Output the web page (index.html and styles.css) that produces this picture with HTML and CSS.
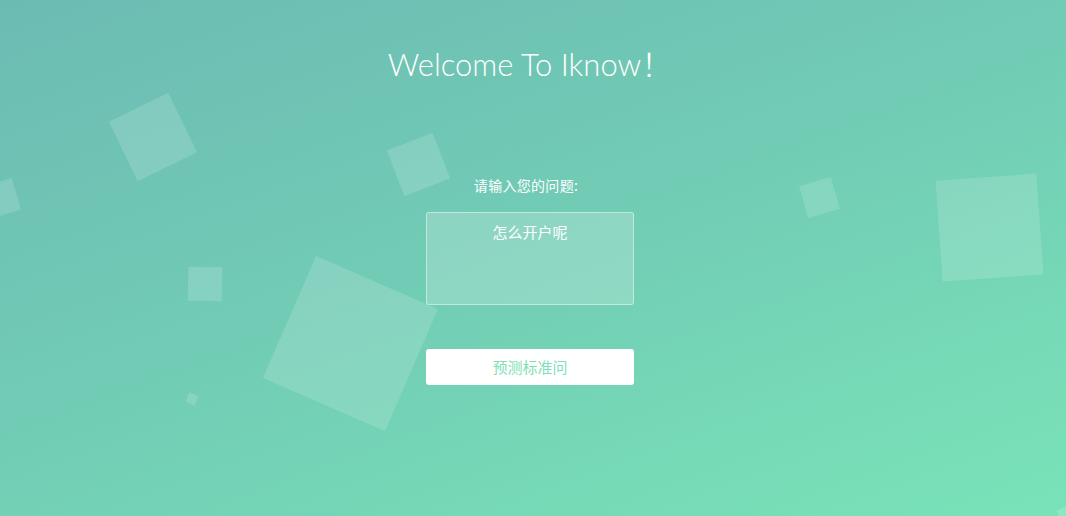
FILE: index.html
```html
<!DOCTYPE html>
<html lang="zh-CN">
<head>
<meta charset="utf-8">
<title>Iknow</title>
<link rel="stylesheet" href="styles.css">
</head>
<body>
<div class="page">
  <div class="bubbles">
    <span class="sq" style="left:120px;top:104px;width:66px;height:66px;transform:rotate(-26deg)"></span>
    <span class="sq" style="left:-16px;top:182px;width:33px;height:33px;transform:rotate(-16deg)"></span>
    <span class="sq" style="left:188px;top:267px;width:34px;height:34px;transform:rotate(1deg)"></span>
    <span class="sq" style="left:187px;top:394px;width:10px;height:10px;transform:rotate(25deg)"></span>
    <span class="sq" style="left:284px;top:277px;width:133px;height:133px;transform:rotate(23.5deg)"></span>
    <span class="sq" style="left:394px;top:140px;width:49px;height:49px;transform:rotate(-21deg)"></span>
    <span class="sq" style="left:803px;top:181px;width:33px;height:33px;transform:rotate(-16deg)"></span>
    <span class="sq" style="left:939px;top:177px;width:101px;height:101px;transform:rotate(-4deg)"></span>
    <span class="sq" style="left:1066px;top:496px;width:60px;height:60px;transform:rotate(-24deg)"></span>
  </div>
  <main class="content">
    <h1 class="title">Welcome To Iknow<span class="bang">！</span></h1>
    <form class="form">
      <label class="label" for="q">请输入您的问题:</label>
      <textarea id="q" class="question">怎么开户呢</textarea>
      <button type="button" class="submit">预测标准问</button>
    </form>
  </main>
</div>
</body>
</html>
```

FILE: styles.css
```css
html, body {
  margin: 0;
  padding: 0;
  height: 100%;
}

body {
  font-family: "Lato", "Noto Sans CJK SC", sans-serif;
  color: #fff;
  overflow: hidden;
}

.page {
  position: relative;
  width: 100%;
  height: 516px;
  overflow: hidden;
  background: linear-gradient(160deg, #6cbbb3 0%, #72cdb5 50%, #79e3b8 100%);
}

.bubbles {
  position: absolute;
  inset: 0;
  pointer-events: none;
}

.sq {
  position: absolute;
  display: block;
  background: rgba(255, 255, 255, 0.15);
}

.content {
  position: relative;
  display: flex;
  flex-direction: column;
  align-items: center;
  padding-top: 41px;
  padding-right: 26px;
}

.title {
  margin: 0 0 0 20px;
  font-family: "Lato", "Noto Sans CJK SC", sans-serif;
  font-weight: 300;
  font-size: 31px;
  line-height: 43px;
  color: #fff;
}

.bang {
  font-family: "Noto Sans CJK SC", sans-serif;
  font-weight: 300;
}

.form {
  display: flex;
  flex-direction: column;
  align-items: center;
  margin-top: 89px;
  margin-left: 20px;
}

.label {
  margin-right: 8px;
  font-family: "Noto Sans CJK SC", sans-serif;
  font-size: 14px;
  line-height: 20px;
  letter-spacing: 0.3px;
  color: #fff;
}

.question {
  box-sizing: border-box;
  margin-top: 17px;
  width: 208px;
  height: 93px;
  padding: 8px 10px;
  border: 1px solid rgba(255, 255, 255, 0.45);
  border-radius: 3px;
  background: rgba(255, 255, 255, 0.2);
  color: #fff;
  font-family: "Noto Sans CJK SC", sans-serif;
  font-size: 15px;
  line-height: 22px;
  text-align: center;
  resize: none;
  outline: none;
}

.submit {
  box-sizing: border-box;
  margin-top: 44px;
  width: 208px;
  height: 36px;
  padding: 0;
  border: 0;
  border-radius: 3px;
  background: #fff;
  color: #7fdfb6;
  font-family: "Noto Sans CJK SC", sans-serif;
  font-size: 15px;
  line-height: 36px;
  cursor: pointer;
}
```
